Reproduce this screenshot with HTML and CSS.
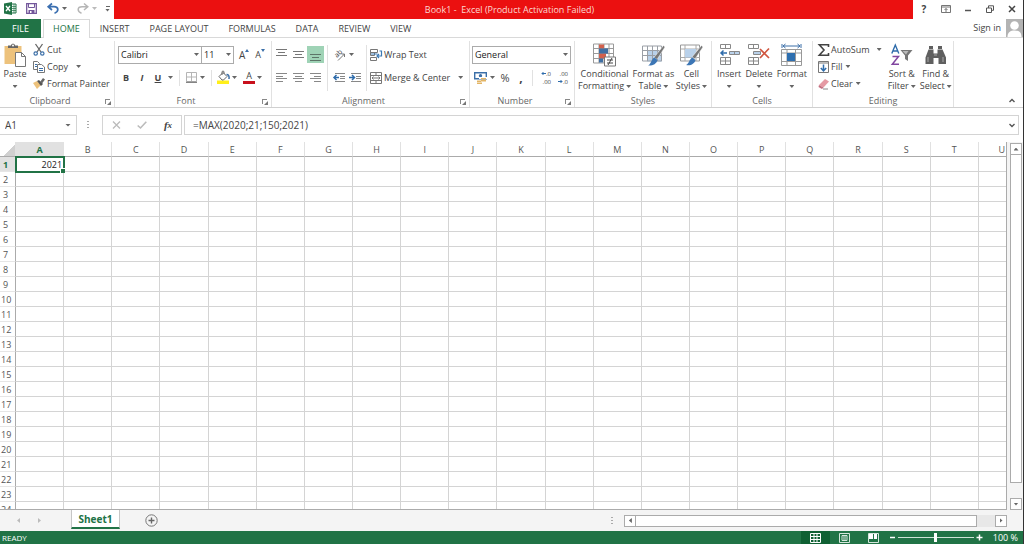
FILE: index.html
```
<!DOCTYPE html>
<html lang="en">
<head>
    <meta charset="UTF-8">
    <meta name="viewport" content="width=device-width, initial-scale=1.0">
    <title>Book1 - Excel</title>
    <link rel="stylesheet" href="styles.css">
</head>
<body>
<header class="titlebar">
    <div class="quick">
        <svg class="logo" width="13" height="13" viewBox="0 0 13 13"><path d="M7 2h5v9H7z" fill="#fff" stroke="#217346"/><path d="M8 4.500h4M8 6.500h4M8 8.500h4M10 2v9" stroke="#217346" stroke-width=".7"/><path d="M0 1.500L8 0v13L0 11.500z" fill="#217346"/><path d="M2 4l4 5M6 4L2 9" stroke="#fff" stroke-width="1.300"/></svg>
        <button class="save" aria-label="Save"><svg width="11" height="11" viewBox="0 0 11 11"><path d="M.7.7h9.600v9.600H.7z" fill="#fff" stroke="#73579b" stroke-width="1.300"/><path d="M2.500 1v3.500h6V1" fill="none" stroke="#73579b"/><path d="M2.500 10V7h6v3z" fill="#73579b"/><path d="M4 8h1.500v2H4z" fill="#fff"/></svg></button>
        <button class="undo" aria-label="Undo"><svg width="12" height="11" viewBox="0 0 12 11"><path d="M5 .5L1.200 3.700 5 7M1.500 3.700H7c5 0 5 5 .5 6.500" fill="none" stroke="#3b6fb0" stroke-width="1.700"/></svg><i class="caret"></i></button>
        <button class="redo" aria-label="Redo"><svg width="12" height="11" viewBox="0 0 12 11"><path d="M7 .5l3.800 3.200L7 7M10.500 3.700H5C0 3.700 0 8.700 4.500 10.200" fill="none" stroke="#b5b5b5" stroke-width="1.500"/></svg><i class="caret pale"></i></button>
        <button class="customize" aria-label="Customize Quick Access Toolbar"><i class="dash"></i><i class="caret"></i></button>
    </div>
    <h1 class="title">Book1 -&nbsp; Excel (Product Activation Failed)</h1>
    <div class="window-buttons">
        <button aria-label="Help"><b>?</b></button>
        <button aria-label="Ribbon options"><svg width="10" height="8" viewBox="0 0 10 8"><path d="M.5.5h9v7h-9zM.5 2h9M5 7V3.500M3.500 5L5 3.500 6.500 5" fill="none" stroke="#666" stroke-width=".9"/></svg></button>
        <button aria-label="Minimize"><svg width="8" height="8" viewBox="0 0 8 8"><path d="M1 5.500h6" stroke="#555" stroke-width="1.500"/></svg></button>
        <button aria-label="Restore"><svg width="8" height="8" viewBox="0 0 8 8"><path d="M.5 3h5v4.500h-5zM2.500 3V.8h5v4.500h-2" fill="none" stroke="#555"/></svg></button>
        <button aria-label="Close"><svg width="8" height="8" viewBox="0 0 8 8"><path d="M1 1l6 6M7 1L1 7" stroke="#444" stroke-width="1.500"/></svg></button>
    </div>
</header>

<nav class="tabs">
    <button class="tab file">FILE</button>
    <button class="tab active">HOME</button>
    <button class="tab">INSERT</button>
    <button class="tab">PAGE LAYOUT</button>
    <button class="tab">FORMULAS</button>
    <button class="tab">DATA</button>
    <button class="tab">REVIEW</button>
    <button class="tab">VIEW</button>
    <a class="signin" href="#">Sign in
        <svg width="17" height="18" viewBox="0 0 17 18"><path d="M0 0h17v18H0z" fill="#b3b3b3"/><circle cx="8.500" cy="6.500" r="4.300" fill="#fff"/><path d="M1.500 18c0-5 3-6.500 7-6.500s7 1.500 7 6.500z" fill="#fff"/></svg>
    </a>
</nav>

<section class="ribbon">
    <div class="group clipboard">
        <div class="tools">
            <button class="big"><svg width="22" height="24" viewBox="0 0 22 24"><path d="M.5 3h17v18H.5z" fill="#edc27c"/><path d="M4 5V2.500h3C7 0 11 0 11 2.500h3V5z" fill="#666"/><circle cx="9" cy="2.500" r="1" fill="#fff"/><path d="M11.500 9.500h6l4 4v10h-10z" fill="#fff" stroke="#777"/><path d="M17.500 9.500v4h4" fill="none" stroke="#777"/></svg><span>Paste</span><i class="caret"></i></button>
            <div class="stack">
                <button><svg width="12" height="12" viewBox="0 0 12 12"><path d="M2.500 0l5.500 8M9.500 0L4 8" stroke="#666" stroke-width="1.300"/><circle cx="2.700" cy="9.500" r="1.700" fill="none" stroke="#3b6fa8" stroke-width="1.200"/><circle cx="9.300" cy="9.500" r="1.700" fill="none" stroke="#3b6fa8" stroke-width="1.200"/></svg>Cut</button>
                <button><svg width="12" height="12" viewBox="0 0 12 12"><path d="M.5.5h4l2 2v6h-6z" fill="#fff" stroke="#777"/><path d="M2 3.500h2M2 5.500h2" stroke="#3b6fa8"/><path d="M4.500 3.500h4l3 2.500v5.500h-7z" fill="#fff" stroke="#777"/><path d="M6 7.500h4M6 9.500h4" stroke="#3b6fa8"/></svg>Copy<i class="caret far"></i></button>
                <button><svg width="12" height="12" viewBox="0 0 12 12"><path d="M0 5l4-2 4 4-4 4z" fill="#edc27c"/><path d="M4 3l2-1 4 4-2 2z" fill="#555"/><path d="M7 4l3-4 2 1.500-3 4z" fill="#666"/></svg>Format Painter</button>
            </div>
        </div>
        <h2 class="has-launcher">Clipboard<i class="launcher"></i></h2>
    </div>

    <div class="group font">
        <div class="tools rows">
            <div class="row">
                <span class="drop family"><select aria-label="Font"><option>Calibri</option></select><i class="caret"></i></span>
                <span class="drop size"><select aria-label="Font size"><option>11</option></select><i class="caret"></i></span>
                <button class="grow" aria-label="Increase font size">A<svg width="4" height="3" viewBox="0 0 4 3"><path d="M0 3l2-3 2 3z" fill="#3b6fa8"/></svg></button>
                <button class="grow shrink" aria-label="Decrease font size">A<svg width="4" height="3" viewBox="0 0 4 3"><path d="M0 0l2 3 2-3z" fill="#3b6fa8"/></svg></button>
            </div>
            <div class="row">
                <button class="icon"><b>B</b></button>
                <button class="icon"><b><em>I</em></b></button>
                <button class="icon"><b><u>U</u></b></button>
                <i class="caret"></i>
                <i class="sep"></i>
                <button class="icon narrow" aria-label="Borders"><svg width="11" height="11" viewBox="0 0 11 11"><path d="M.5.5h10v9H.5zM5.500.5v9M.5 5h10" fill="none" stroke="#b5b5b5"/><path d="M0 10.300h11" stroke="#666"/></svg></button>
                <i class="caret"></i>
                <i class="sep"></i>
                <button class="icon narrow" aria-label="Fill color"><svg width="13" height="13" viewBox="0 0 13 13"><path d="M0 9.500h12V13H0z" fill="#ffef1a"/><path d="M2 5.500l4-4 4 4-3.500 3.500H5zM5 4V1c0-1.300 2-1.300 2 0v2" fill="#fff" stroke="#666"/><path d="M9.500 3.500c2 0 3 1.500 2.500 4.500" fill="none" stroke="#3b6fa8" stroke-width="1.500"/></svg></button>
                <i class="caret"></i>
                <button class="icon font-color" aria-label="Font color">A</button>
                <i class="caret"></i>
            </div>
        </div>
        <h2 class="has-launcher">Font<i class="launcher"></i></h2>
    </div>

    <div class="group alignment">
        <div class="tools">
            <div class="rows">
                <div class="row">
                    <button class="icon lines" aria-label="Top align"><svg width="11" height="13" viewBox="0 0 11 13"><path d="M0 1.500h11M2 4.500h7M0 7.500h11" stroke="#777"/></svg></button>
                    <button class="icon lines" aria-label="Middle align"><svg width="11" height="13" viewBox="0 0 11 13"><path d="M0 3.500h11M2 6.500h7M0 9.500h11" stroke="#777"/></svg></button>
                    <button class="icon lines on" aria-label="Bottom align"><svg width="11" height="13" viewBox="0 0 11 13"><path d="M0 6.500h11M2 9.500h7M0 12.500h11" stroke="#5d7568"/></svg></button>
                </div>
                <div class="row">
                    <button class="icon lines" aria-label="Align left"><svg width="11" height="9" viewBox="0 0 11 9"><path d="M0 .5h11M0 3.500h7M0 5.500h11M0 8.500h7" stroke="#888"/></svg></button>
                    <button class="icon lines" aria-label="Center"><svg width="11" height="9" viewBox="0 0 11 9"><path d="M0 .5h11M2 3.500h7M0 5.500h11M2 8.500h7" stroke="#888"/></svg></button>
                    <button class="icon lines" aria-label="Align right"><svg width="11" height="9" viewBox="0 0 11 9"><path d="M0 .5h11M4 3.500h7M0 5.500h11M4 8.500h7" stroke="#888"/></svg></button>
                </div>
            </div>
            <i class="sep"></i>
            <div class="rows turn">
                <div class="row">
                    <button class="icon" aria-label="Orientation"><svg width="13" height="12" viewBox="0 0 13 12"><text transform="translate(4 9) rotate(-45)" font-size="7" fill="#333">ab</text><path d="M5 11.500L11.500 5M11.500 8V5H8.500" fill="none" stroke="#777"/></svg></button>
                    <i class="caret"></i>
                </div>
                <div class="row">
                    <button class="icon" aria-label="Decrease indent"><svg width="12" height="9" viewBox="0 0 12 9"><path d="M2 .5h10M7 3.500h5M7 5.500h5M2 8.500h10" stroke="#888"/><path d="M6 4.500H1M3.500 2L1 4.500 3.500 7" fill="none" stroke="#2f6cab" stroke-width="1.500"/></svg></button>
                    <button class="icon" aria-label="Increase indent"><svg width="12" height="9" viewBox="0 0 12 9"><path d="M2 .5h10M7 3.500h5M7 5.500h5M2 8.500h10" stroke="#888"/><path d="M0 4.500h5M3 2l2.500 2.500L3 7" fill="none" stroke="#2f6cab" stroke-width="1.500"/></svg></button>
                </div>
            </div>
            <i class="sep"></i>
            <div class="rows labelled">
                <button><svg width="12" height="12" viewBox="0 0 12 12"><path d="M.5.5h7v3h-7zM.5 3.500h4v3h-4zM.5 8.500h6v3h-6z" fill="#fff" stroke="#777"/><path d="M1 5h6.500M9.500 2h2v5H7M9 5L7 7l2 2" fill="none" stroke="#3b7ab5" stroke-width="1.200"/></svg>Wrap Text</button>
                <button><svg width="12" height="12" viewBox="0 0 12 12"><path d="M.5.5h11v11H.5zM.5 3.500h11M.5 8.500h11M6 .5v3M6 8.500v3" fill="#fff" stroke="#777"/><path d="M2 6h8M3.500 4.500L2 6l1.500 1.500M8.500 4.500L10 6 8.500 7.500" fill="none" stroke="#777"/></svg>Merge &amp; Center<i class="caret far"></i></button>
            </div>
        </div>
        <h2 class="has-launcher">Alignment<i class="launcher"></i></h2>
    </div>

    <div class="group number">
        <div class="tools rows">
            <div class="row">
                <span class="drop format"><select aria-label="Number format"><option>General</option></select><i class="caret"></i></span>
            </div>
            <div class="row">
                <button class="icon" aria-label="Accounting format"><svg width="13" height="12" viewBox="0 0 13 12"><path d="M.7.7h11.600v6H.7z" fill="#fff" stroke="#3b6fa8" stroke-width="1.400"/><circle cx="6.500" cy="3.700" r="1.700" fill="#3b6fa8"/><path d="M5 5h8v2H5z" fill="#fff"/><path d="M7 6h5v1.500H7zM7 8h5v1.500H7zM3 8.500h4V10H3zM3 10.500h5V12H3z" fill="#e3b566"/></svg></button>
                <i class="caret"></i>
                <button class="icon percent">%</button>
                <button class="icon comma"><b>,</b></button>
                <i class="sep"></i>
                <button class="icon decimals" aria-label="Increase decimal"><span><svg width="5" height="5" viewBox="0 0 5 5"><path d="M5 2.500H1M2.500 1L1 2.500 2.500 4" fill="none" stroke="#2f6cab"/></svg>.0</span><span>.00</span></button>
                <button class="icon decimals" aria-label="Decrease decimal"><span>.00</span><span><svg width="5" height="5" viewBox="0 0 5 5"><path d="M0 2.500h4M2.500 1L4 2.500 2.500 4" fill="none" stroke="#2f6cab"/></svg>.0</span></button>
            </div>
        </div>
        <h2 class="has-launcher">Number<i class="launcher"></i></h2>
    </div>

    <div class="group styles">
        <div class="tools">
            <button class="big"><svg width="23" height="23" viewBox="0 0 23 23"><path d="M.5.5h20v19H.5zM.5 5h20M.5 10h20M.5 15h20M6 .5v19M11 .5v19M16 .5v19" fill="#fff" stroke="#999"/><path d="M6 1h5v4H6zM6 10h7v5H6z" fill="#d2604c"/><path d="M6 5h9v5H6zM6 15h4v4H6z" fill="#3f6fa3"/><path d="M11.500 13.500h11v9h-11z" fill="#fff" stroke="#777"/><path d="M14 16.500h6M14 19.500h6M19 14.500l-4 7" stroke="#444"/></svg><span>Conditional<br>Formatting<i class="caret"></i></span></button>
            <button class="big"><svg width="23" height="23" viewBox="0 0 23 23"><path d="M.5 2.500h19v15H.5z" fill="#fff"/><path d="M5 7h15v11H5z" fill="#b9d1ea"/><path d="M.5 2.500h19v15H.5zM.5 7h19M.5 12h19M5.500 2.500v15M10.500 2.500v15M15.500 2.500v15" fill="none" stroke="#9a9fa6"/><path d="M21.500 2l1.500 1.500-8 12.500-3-2z" fill="#777" stroke="#fff" stroke-width=".5"/><path d="M12.500 14l3 2.500c-1 4-5 6-9.500 5.500 3-1 3.500-7 6.500-8z" fill="#3c76b5"/></svg><span>Format as<br>Table<i class="caret"></i></span></button>
            <button class="big"><svg width="23" height="23" viewBox="0 0 23 23"><path d="M.5 1.500h19v16H.5z" fill="#fff" stroke="#999"/><path d="M.5 5.500h19M.5 14h19M5 1.500v16M16 1.500v16" stroke="#aaa"/><path d="M5 5.500h11V14H5z" fill="#b9d1ea"/><path d="M21.500 2l1.500 1.500-8 12-3-2z" fill="#777" stroke="#fff" stroke-width=".5"/><path d="M12.500 14l3 2.500c-1 4-5 6-9.500 5 3-1 3.500-6.500 6.500-7.500z" fill="#3c76b5"/></svg><span>Cell<br>Styles<i class="caret"></i></span></button>
        </div>
        <h2>Styles</h2>
    </div>

    <div class="group cells">
        <div class="tools">
            <button class="big"><svg width="21" height="22" viewBox="0 0 21 22"><path d="M1.500.5h10v4h-10zM6.500.5v4M1.500 13.500h10v7h-10zM6.500 13.500v7M1.500 17h10" fill="#fff" stroke="#888"/><path d="M10.500 7.500h10v3h-10z" fill="#b9d1ea" stroke="#888"/><path d="M15.500 7.500v3" stroke="#888"/><path d="M8 9H2M4.500 6.500L2 9l2.500 2.500" fill="none" stroke="#2f6cab" stroke-width="1.500"/></svg><span>Insert</span><i class="caret"></i></button>
            <button class="big"><svg width="22" height="22" viewBox="0 0 22 22"><path d="M.5.5h10v4H.5zM5.500.5v4M.5 13.500h10v7H.5zM5.500 13.500v7M.5 17h10" fill="#fff" stroke="#888"/><path d="M5.500 7.500h7v3h-7z" fill="#b9d1ea" stroke="#888"/><path d="M12 5l9 9M21 4.500L12 14" stroke="#d0553f" stroke-width="1.700"/></svg><span>Delete</span><i class="caret"></i></button>
            <button class="big"><svg width="22" height="22" viewBox="0 0 22 22"><path d="M1 0v4M20 0v4M2 2h17M4.500 0L2 2l2.500 2M16.500 0L19 2l-2.500 2" fill="none" stroke="#3b6fa8"/><path d="M.5 5.500h20v16H.5zM.5 9h20M.5 17.500h20M6 5.500v16M14.500 5.500v16" fill="#fff" stroke="#999"/><path d="M6 9h8v8H6z" fill="#2e6fb0"/></svg><span>Format</span><i class="caret"></i></button>
        </div>
        <h2>Cells</h2>
    </div>

    <div class="group editing">
        <div class="tools">
            <div class="stack">
                <button><svg width="12" height="12" viewBox="0 0 12 12"><path d="M10.500 3V.8H1.300L6 6l-4.700 5.200h9.200V9" fill="none" stroke="#444" stroke-width="1.600"/></svg>AutoSum<i class="caret far"></i></button>
                <button><svg width="12" height="12" viewBox="0 0 12 12"><path d="M.5.5h10v11H.5z" fill="#fff" stroke="#777"/><path d="M.5 2h10" stroke="#777"/><path d="M5.500 3.500V9.500M2.800 7l2.700 2.800L8.200 7" fill="none" stroke="#2f6cab" stroke-width="1.500"/></svg>Fill<i class="caret"></i></button>
                <button><svg width="12" height="12" viewBox="0 0 12 12"><path d="M1 7l6-6 4 2.500-5.500 6z" fill="#e59aa4"/><path d="M1 7l4.500 2.500L4 11 .5 9z" fill="#c46f80"/><path d="M5 11h5" stroke="#888"/></svg>Clear<i class="caret"></i></button>
            </div>
            <button class="big"><svg width="22" height="22" viewBox="0 0 22 22"><path d="M.8 9.500L4.300 1l3.500 8.500M2 7h4.700" fill="none" stroke="#2f6cab" stroke-width="1.400"/><path d="M1.500 12.500h6L1.300 20.200H8" fill="none" stroke="#8246a0" stroke-width="1.500"/><path d="M9.500 6h12l-4.500 5.500V17l-3-2v-3.500z" fill="#777"/><path d="M11.500 7h6l-2.500 3.500z" fill="#bbb"/></svg><span>Sort &amp;<br>Filter<i class="caret"></i></span></button>
            <button class="big"><svg width="22" height="22" viewBox="0 0 22 22"><path d="M4 2h4v3H4zM13 2h4v3h-4zM3.500 5.500h5v4h4v-4h5l3.500 8v6.500h-7.500v-6h-5v6H.5v-6.500z" fill="#5f5f5f"/><path d="M3 13v5M18 13v5M9 11h3" stroke="#aaa"/></svg><span>Find &amp;<br>Select<i class="caret"></i></span></button>
        </div>
        <h2>Editing</h2>
    </div>
    <button class="collapse" aria-label="Collapse ribbon"><svg width="6" height="5" viewBox="0 0 6 5"><path d="M.5 4L3 1.500 5.500 4" fill="none" stroke="#555" stroke-width="1.400"/></svg></button>
</section>

<section class="formula-bar">
    <div class="namebox"><input type="text" value="A1" aria-label="Name box"><button aria-label="Names"><i class="caret wide"></i></button></div>
    <i class="dots"></i>
    <div class="formula-buttons">
        <button aria-label="Cancel"><svg width="9" height="8" viewBox="0 0 9 8"><path d="M1 .5l7 7M8 .5l-7 7" stroke="#bbb" stroke-width="1.300"/></svg></button>
        <button aria-label="Enter"><svg width="10" height="8" viewBox="0 0 10 8"><path d="M.7 4.500L3.500 7 9.300.7" fill="none" stroke="#bbb" stroke-width="1.600"/></svg></button>
        <button class="fx" aria-label="Insert function">f<small>x</small></button>
    </div>
    <div class="formula"><input type="text" value="=MAX(2020;21;150;2021)" aria-label="Formula"><button aria-label="Expand formula bar"><svg width="6" height="5" viewBox="0 0 6 5"><path d="M.5 1L3 3.500 5.500 1" fill="none" stroke="#555" stroke-width="1.400"/></svg></button></div>
</section>

<main class="sheet">
    <div class="grid-wrap">
        <table class="grid" id="grid"></table>
    </div>
    <div class="vscroll">
        <button aria-label="Scroll up"><i class="arrow up"></i></button>
        <div class="vthumb"></div>
        <button aria-label="Scroll down"><i class="arrow down"></i></button>
    </div>
</main>

<section class="sheetbar">
    <button class="nav" aria-label="Previous sheet"><i class="arrow left"></i></button>
    <button class="nav" aria-label="Next sheet"><i class="arrow right"></i></button>
    <button class="sheet-tab">Sheet1</button>
    <button class="add" aria-label="New sheet"><svg width="13" height="13" viewBox="0 0 13 13"><circle cx="6.500" cy="6.500" r="5.700" fill="none" stroke="#777"/><path d="M6.500 3.500v6M3.500 6.500h6" stroke="#666" stroke-width="1.400"/></svg></button>
    <i class="dots"></i>
    <div class="hscroll">
        <button aria-label="Scroll left"><i class="arrow left"></i></button>
        <div class="hthumb"></div>
        <button aria-label="Scroll right"><i class="arrow right"></i></button>
    </div>
</section>

<footer class="status">
    <span class="ready">READY</span>
    <button class="view on" aria-label="Normal view"><svg width="11" height="10" viewBox="0 0 11 10"><path d="M.5.5h10v9H.5zM4 .5v9M7 .5v9M.5 3.500h10M.5 6.500h10" fill="none" stroke="#fff"/></svg></button>
    <button class="view" aria-label="Page layout view"><svg width="11" height="10" viewBox="0 0 11 10"><path d="M.5.5h10v9H.5zM3 2.500h5v5H3zM4 4h3M4 6h3" fill="none" stroke="#d5e6dc"/></svg></button>
    <button class="view" aria-label="Page break preview"><svg width="11" height="10" viewBox="0 0 11 10"><path d="M.5.5h10v9H.5z" fill="none" stroke="#d5e6dc"/><path d="M1 1h4v5H1zM6 1h3v5H6z" fill="#fff"/></svg></button>
    <button class="zoom-step" aria-label="Zoom out"><svg width="7" height="7" viewBox="0 0 7 7"><path d="M1 3.500h5" stroke="#fff" stroke-width="1.500"/></svg></button>
    <input type="range" class="zoom" min="0" max="200" value="100" aria-label="Zoom">
    <button class="zoom-step" aria-label="Zoom in"><svg width="7" height="7" viewBox="0 0 7 7"><path d="M.5 3.500h6M3.500.5v6" stroke="#fff" stroke-width="1.500"/></svg></button>
    <button class="percent-label">100 %</button>
</footer>
<script src="grid.js"></script>
</body>
</html>
```
FILE: styles.css
```
* {
    box-sizing: border-box;
}
body {
    margin: 0;
    height: 100vh;
    display: flex;
    flex-direction: column;
    overflow: hidden;
    background: #fff;
    color: #444;
    font-family: "Open Sans", "Noto Sans", sans-serif;
    font-size: 9px;
    line-height: 12px;
    border-right: 1px solid #333;
}
button, input, select {
    font: inherit;
    color: inherit;
    border: none;
    background: none;
    padding: 0;
    margin: 0;
}
button {
    display: flex;
    align-items: center;
    justify-content: center;
    white-space: nowrap;
}
svg {
    display: block;
    flex: none;
    overflow: visible;
}
h1, h2 {
    margin: 0;
    font-size: 9px;
    font-weight: normal;
}

/* small arrows */
.caret {
    display: inline-block;
    flex: none;
    width: 5px;
    height: 3px;
    margin: 0 2px;
    background: #666;
    clip-path: polygon(0 0, 100% 0, 50% 100%);
    vertical-align: middle;
}
.caret.wide {
    width: 6px;
    margin: 0;
}
.caret.pale {
    background: #bbb;
}
.caret.far {
    margin-left: 6px;
}
.arrow {
    width: 5px;
    height: 3px;
    background: #666;
}
.arrow.up { clip-path: polygon(50% 0, 100% 100%, 0 100%); }
.arrow.down { clip-path: polygon(0 0, 100% 0, 50% 100%); }
.arrow.left, .arrow.right {
    width: 3px;
    height: 5px;
}
.arrow.left { clip-path: polygon(100% 0, 100% 100%, 0 50%); }
.arrow.right { clip-path: polygon(0 0, 100% 50%, 0 100%); }
.dots {
    flex: none;
    width: 2px;
    height: 8px;
    background: repeating-linear-gradient(#aaa 0 1px, transparent 1px 3px);
}

/* title bar */
.titlebar {
    flex: none;
    display: flex;
    height: 19px;
}
.quick {
    width: 114px;
    display: flex;
    align-items: center;
    padding: 0 2px 2px 4px;
}
.save { margin-left: 9px; }
.undo { margin-left: 10px; }
.redo { margin-left: 10px; }
.undo .caret, .redo .caret { margin: 0 0 0 3px; }
.customize {
    flex-direction: column;
    gap: 2px;
    margin-left: auto;
}
.dash {
    width: 4px;
    height: 1px;
    background: #666;
}
.title {
    flex: 1;
    background: #eb1010;
    color: #fbd9d3;
    text-align: center;
    line-height: 19px;
    padding-right: 8px;
}
.window-buttons {
    display: flex;
}
.window-buttons button {
    width: 22px;
    height: 17px;
}
.window-buttons b {
    font-size: 10px;
}

/* tabs */
.tabs {
    flex: none;
    display: flex;
    height: 19px;
    border-bottom: 1px solid #d9d9d9;
}
.tab {
    padding: 0 10px;
    height: 19px;
}
.tab.file {
    width: 41px;
    margin-right: 2px;
    background: #217346;
    color: #fff;
}
.tab.active {
    padding: 0 9px;
    color: #217346;
    background: #fff;
    border: 1px solid #d9d9d9;
    border-bottom: none;
}
.signin {
    display: flex;
    gap: 5px;
    margin-left: auto;
    line-height: 18px;
    color: #444;
    text-decoration: none;
}

/* ribbon */
.ribbon {
    flex: none;
    display: flex;
    height: 70px;
    border-bottom: 1px solid #d0d0d0;
}
.group {
    flex: none;
    display: flex;
    flex-direction: column;
    margin-top: 3px;
    border-right: 1px solid #e1e1e1;
}
.group h2 {
    position: relative;
    text-align: center;
    color: #666;
}
.group .has-launcher {
    padding-right: 14px;
}
.launcher {
    position: absolute;
    right: 4px;
    bottom: 3px;
    width: 5px;
    height: 5px;
    border: 1px solid #888;
    border-right: none;
    border-bottom: none;
}
.launcher::after {
    content: "";
    position: absolute;
    left: 1px;
    top: 1px;
    width: 4px;
    height: 4px;
    background: #777;
    clip-path: polygon(100% 0, 100% 100%, 0 100%);
}
.tools {
    flex: 1;
    display: flex;
}
.clipboard { width: 115px; }
.font { width: 157px; }
.alignment { width: 198px; }
.number { width: 105px; }
.styles { width: 137px; }
.cells { width: 101px; }
.editing { width: 141px; }

.big {
    flex-direction: column;
    justify-content: flex-start;
    padding-top: 2px;
    line-height: 12px;
}
.big svg {
    height: 24px;
    margin-bottom: 1px;
}
.big > .caret {
    margin-top: 5px;
}
.big span .caret {
    margin-right: 0;
}
.clipboard .big {
    width: 33px;
    padding-right: 3px;
}
.stack button {
    height: 17px;
    gap: 2px;
}
.editing .stack button {
    gap: 1px;
}
.rows {
    display: flex;
    flex-direction: column;
    gap: 6px;
    padding-top: 5px;
}
.row {
    display: flex;
    align-items: center;
    height: 17px;
}
.font .rows {
    padding-left: 3px;
}
.number .rows {
    padding-left: 2px;
}
.icon {
    width: 16px;
    height: 17px;
}
.icon.narrow {
    width: 14px;
}
.sep {
    width: 1px;
    height: 16px;
    margin: 0 3px;
    background: #e1e1e1;
}
.font .sep {
    margin: 0 4px;
}
.drop {
    display: flex;
    align-items: center;
    height: 18px;
    border: 1px solid #ababab;
    background: #fff;
    color: #222;
}
.drop select {
    flex: 1;
    min-width: 0;
    appearance: none;
    padding-left: 2px;
}
.family { width: 84px; }
.size {
    width: 32px;
    border-left: none;
}
.format { width: 99px; }
.grow {
    align-items: flex-start;
    margin-left: 5px;
    font-size: 10px;
}
.shrink {
    margin-left: 6px;
    font-size: 9px;
}
.font-color {
    height: 13px;
    border-bottom: 3px solid #c8101c;
    width: 12px;
    margin-left: 4px;
}
.lines {
    width: 17px;
}
.on {
    background: #9fd3b6;
}
.alignment .tools {
    padding-left: 1px;
}
.alignment .tools > .sep {
    height: 46px;
    margin-top: 4px;
}
.turn {
    width: 32px;
}
.labelled button {
    height: 17px;
    gap: 2px;
    justify-content: flex-start;
}
.percent {
    font-size: 11px;
}
.comma {
    font-size: 12px;
}
.decimals {
    flex-direction: column;
    align-items: flex-end;
    width: 15px;
    font-size: 6px;
    line-height: 8px;
}
.decimals span {
    display: flex;
    align-items: center;
}
.decimals + .decimals {
    margin-left: 2px;
}
.styles .tools {
    padding: 0 4px 0 3px;
    justify-content: space-between;
}
.cells .tools {
    padding: 0 5px;
    justify-content: space-between;
}
.editing .tools {
    padding: 0 4px 0 5px;
    gap: 4px;
}
.editing .stack {
    width: 66px;
}
.collapse {
    align-self: flex-end;
    margin: 0 8px 4px auto;
}

/* formula bar */
.formula-bar {
    flex: none;
    display: flex;
    align-items: center;
    height: 34px;
    padding-right: 4px;
    font-size: 10px;
}
.namebox, .formula-buttons, .formula {
    display: flex;
    align-items: center;
    height: 20px;
    border: 1px solid #d4d4d4;
}
.namebox {
    width: 77px;
    border-left: none;
    padding: 0 5px;
}
.namebox input, .formula input {
    flex: 1;
    min-width: 0;
}
.formula-bar .dots {
    margin: 0 13px 0 10px;
}
.formula-buttons {
    width: 80px;
    margin-right: 2px;
}
.formula-buttons button {
    flex: 1;
}
.fx {
    font-family: "Liberation Serif", serif;
    font-size: 11px;
    font-style: italic;
    font-weight: bold;
}
.fx small {
    font-size: 9px;
}
.formula {
    flex: 1;
    padding: 0 3px 0 8px;
}

/* sheet */
.sheet {
    flex: 1;
    min-height: 0;
    display: flex;
}
.grid-wrap {
    flex: 1;
    overflow: hidden;
    border-bottom: 1px solid #ababab;
}
.grid {
    width: 100%;
    table-layout: fixed;
    border-collapse: separate;
    border-spacing: 0;
    border-right: 1px solid #ababab;
}
.grid .row-head { width: 16px; }
.grid .last { width: 27px; }
.grid th, .grid td {
    height: 15px;
    padding: 2px 0 0;
    line-height: 12px;
    border-right: 1px solid #d4d4d4;
    border-bottom: 1px solid #d4d4d4;
    white-space: nowrap;
}
.grid th {
    font-weight: normal;
    color: #555;
}
.grid thead th {
    border-color: #e1e1e1;
    border-bottom-color: #ababab;
}
.grid thead th:last-child {
    border-right: none;
    text-align: right;
    padding-right: 1px;
}
.grid tbody th {
    border-right-color: #ababab;
    border-bottom-color: #e6e6e6;
    text-align: left;
    padding-left: 1px;
}
.grid tbody th.short {
    padding-left: 3px;
}
.grid td:last-child {
    border-right: none;
}
.grid .corner {
    background: linear-gradient(135deg, transparent 60%, #d0d0d0 60%);
}
.grid .current {
    background: #e1e1e1;
    color: #217346;
    font-weight: bold;
}
.grid .selected {
    position: relative;
    text-align: right;
    padding-right: 1px;
    color: #222;
    outline: 2px solid #217346;
    outline-offset: -1px;
}
.grid .selected::after {
    content: "";
    position: absolute;
    right: -2px;
    bottom: -2px;
    width: 4px;
    height: 4px;
    background: #217346;
    border: 1px solid #fff;
    border-width: 1px 0 0 1px;
}
.vscroll {
    display: flex;
    flex-direction: column;
    width: 16px;
    padding: 1px 1px 0 3px;
    background: #f4f4f4;
}
.vscroll button, .hscroll button {
    flex: none;
    width: 12px;
    height: 12px;
    border: 1px solid #ababab;
    background: #fff;
}
.vthumb {
    flex: 1;
    margin-bottom: 15px;
    border: 1px solid #ababab;
    border-top: none;
    background: #fff;
}

/* sheet tabs */
.sheetbar {
    flex: none;
    display: flex;
    align-items: center;
    height: 21px;
    padding-right: 16px;
    background: #f4f4f4;
}
.nav {
    width: 21px;
}
.nav .arrow {
    background: #bbb;
}
.nav:first-child {
    margin-left: 8px;
}
.sheet-tab {
    align-self: flex-start;
    width: 49px;
    height: 19px;
    margin: 0 25px 0 21px;
    border: 1px solid #c6c6c6;
    border-top: none;
    border-bottom: 2px solid #217346;
    background: #fff;
    color: #217346;
    font-size: 10px;
    font-weight: bold;
}
.sheetbar .dots {
    margin: 0 11px 0 auto;
}
.hscroll {
    display: flex;
    width: 38%;
    background: #e8e8e8;
}
.hthumb {
    flex: 1;
    margin-right: 18px;
    border: 1px solid #ababab;
    border-left: none;
    background: #fff;
}

/* status bar */
.status {
    flex: none;
    display: flex;
    align-items: center;
    height: 13px;
    padding-right: 5px;
    background: #217346;
    color: #fff;
}
.ready {
    margin-right: auto;
    padding-left: 2px;
    font-size: 8px;
}
.view {
    width: 29px;
    height: 13px;
}
.view.on {
    background: #0f6033;
}
.zoom-step {
    width: 9px;
}
.zoom {
    appearance: none;
    width: 76px;
    height: 10px;
    margin: 0 1px;
    background: linear-gradient(#cfe3d7, #cfe3d7) center / 100% 1px no-repeat;
}
.zoom::-webkit-slider-thumb {
    appearance: none;
    width: 3px;
    height: 9px;
    background: #fff;
}
.percent-label {
    margin-left: 9px;
}
```
FILE: grid.js
```
var letters = 'ABCDEFGHIJKLMNOPQRSTU'.split('');
var rowCount = 24;
var values = { A1: '2021' };
var active = 'A1';

var html = '<thead><tr><th class="row-head corner"></th>';
letters.forEach(function (letter, i) {
    var cls = letter === active.charAt(0) ? 'current' : '';
    if (i === letters.length - 1) cls = 'last';
    html += '<th class="' + cls + '">' + letter + '</th>';
});
html += '</tr></thead><tbody>';

for (var r = 1; r <= rowCount; r++) {
    var rowCls = r < 10 ? 'short' : '';
    if (String(r) === active.slice(1)) rowCls += ' current';
    html += '<tr><th class="' + rowCls + '">' + r + '</th>';
    letters.forEach(function (letter) {
        var id = letter + r;
        html += '<td' + (id === active ? ' class="selected"' : '') + '>' + (values[id] || '') + '</td>';
    });
    html += '</tr>';
}
document.getElementById('grid').innerHTML = html + '</tbody>';
```
